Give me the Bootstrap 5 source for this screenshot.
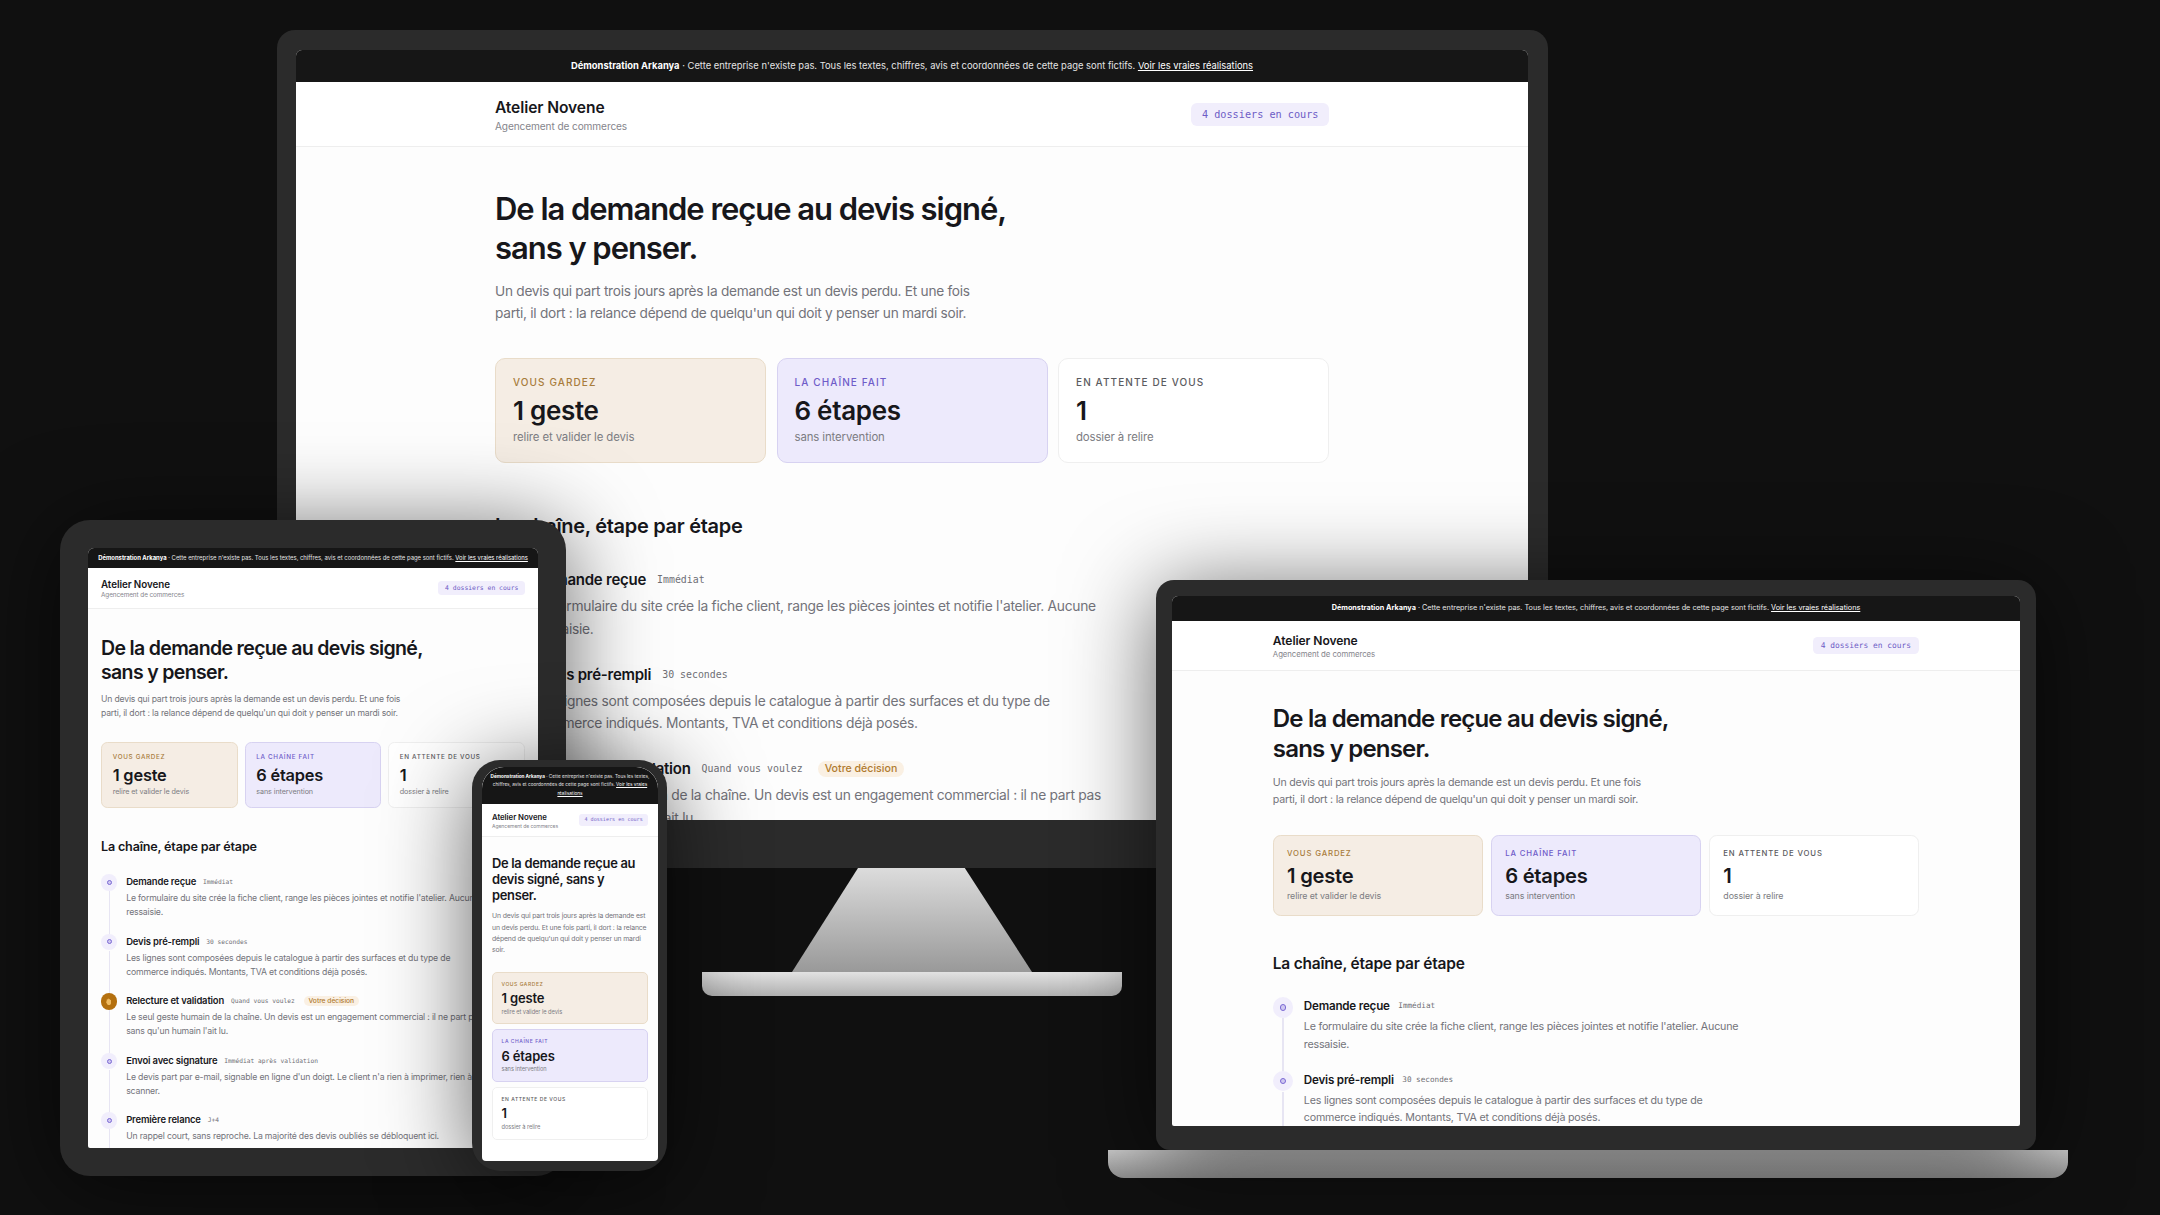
<!DOCTYPE html>
<html lang="fr">
<head>
  <meta charset="UTF-8" />
  <title>Atelier Novene - maquettes</title>
  <link href="https://cdn.jsdelivr.net/npm/bootstrap@5.3.0/dist/css/bootstrap.min.css" rel="stylesheet">
  <style>
    body { margin: 0; background: #101010; width: 2160px; height: 1215px; overflow: hidden; font-family: "Inter", "Noto Sans", sans-serif; }
    .stage { position: relative; width: 2160px; height: 1215px; }
    .device { position: absolute; background: #2b2b2b; box-shadow: 0 10px 90px rgba(0,0,0,.6); }
    .screen-area { position: absolute; background: #fff; overflow: hidden; }

    .mon { left: 277px; top: 30px; width: 1271px; height: 838px; border-radius: 18px 18px 0 0; box-shadow: none; }
    .mon .screen-area { left: 19px; top: 20px; width: 1232px; height: 770px; border-radius: 6px 6px 0 0; }
    .mon-neck { position: absolute; left: 792px; top: 868px; width: 240px; height: 104px; clip-path: polygon(27.5% 0, 72% 0, 100% 100%, 0 100%); background: linear-gradient(#dcdcdc, #999); }
    .mon-base { position: absolute; left: 702px; top: 972px; width: 420px; height: 24px; border-radius: 0 0 10px 10px; background: linear-gradient(#e2e2e2, #b0b0b0); }

    .lap { left: 1156px; top: 580px; width: 880px; height: 570px; border-radius: 18px 18px 14px 14px; }
    .lap .screen-area { left: 16px; top: 16px; width: 848px; height: 530px; border-radius: 6px 6px 2px 2px; }
    .lap-base { position: absolute; left: 1108px; top: 1150px; width: 960px; height: 28px; border-radius: 0 0 16px 16px; background: linear-gradient(#c8c8c8, #8f8f8f); }

    .tab { left: 60px; top: 520px; width: 506px; height: 656px; border-radius: 30px; }
    .tab .screen-area { left: 28px; top: 28px; width: 450px; height: 600px; border-radius: 6px 6px 2px 2px; }

    .pho { left: 472px; top: 760px; width: 195px; height: 411px; border-radius: 28px; }
    .pho .screen-area { left: 10px; top: 7px; width: 176px; height: 394px; border-radius: 22px 22px 4px 4px; }

    .site { width: 100%; background: #fdfdfd; color: #17171b; }
    .z-lap { zoom: .775; }
    .z-tab { zoom: .63; }
    .z-pho { zoom: .5; }

    .demo-bar { background: #161616; color: #e4e4e4; height: 32px; font-size: 9.4px; line-height: 32px; text-align: center; white-space: nowrap; }
    .demo-bar strong { color: #fff; font-weight: 700; }
    .demo-bar a { color: #fff; }
    .site-head { height: 65px; background: #fff; border-bottom: 1px solid #eeeeee; }
    .wrap-inner { width: 834px; margin: 0 auto; }
    .brand-name { font-size: 15.6px; font-weight: 600; line-height: 20px; letter-spacing: -.1px; margin-top: 3px; }
    .brand-sub { font-size: 10.1px; line-height: 16px; color: #85858c; letter-spacing: -.1px; }
    .count-pill { background: #f1eefc; color: #6d5cc6; font-family: "DejaVu Sans Mono", "Liberation Mono", monospace; font-size: 10.2px; padding: 0 10.5px; height: 23px; line-height: 23px; border-radius: 6px; }

    .hero-title { font-size: 31px; line-height: 39px; font-weight: 600; letter-spacing: -1.05px; margin: 42px 0 0; color: #17171b; }
    .hero-text { font-size: 13.7px; line-height: 21.5px; color: #73737a; margin: 14px 0 0; width: 490px; letter-spacing: -.02em; }
    .stat-row { display: flex; gap: 10.5px; margin-top: 34px; }
    .stat-box { flex: 1 1 0; height: 105px; border: 1px solid #efefef; border-radius: 10px; background: #fff; padding: 16px 17px 0; }
    .stat-keep { background: #f5ede4; border-color: #e9dcc9; }
    .stat-chain { background: #edeafc; border-color: #d7d2f1; }
    .stat-label { font-size: 10px; line-height: 14px; font-weight: 500; letter-spacing: 1.1px; text-transform: uppercase; color: #5b5b60; }
    .stat-keep .stat-label { color: #a87c3c; }
    .stat-chain .stat-label { color: #6f5cc9; }
    .stat-value { font-size: 26px; line-height: 30px; font-weight: 600; margin-top: 6.5px; letter-spacing: -.3px; }
    .stat-sub { font-size: 11.4px; line-height: 16px; margin-top: 3.5px; color: #7c7c82; letter-spacing: -.01em; }

    .chain-title { font-size: 20px; line-height: 26px; font-weight: 600; margin: 49.5px 0 0; letter-spacing: -.3px; }
    .step-list { margin-top: 29.5px; }
    .step-item { display: flex; gap: 14px; height: 94.5px; }
    .step-rail { position: relative; width: 26px; flex: none; }
    .step-rail::after { content: ""; position: absolute; left: 12px; top: 27px; bottom: -2px; width: 2px; background: #e7e5f3; }
    .step-dot { width: 26px; height: 26px; border-radius: 50%; background: #f1eefc; display: flex; align-items: center; justify-content: center; }
    .step-dot span { width: 8px; height: 8px; border-radius: 50%; border: 2.5px solid #7a68d4; background: #cfc8f0; }
    .step-human { background: #b4700f; }
    .step-head { display: flex; align-items: center; gap: 11px; line-height: 24px; height: 24px; white-space: nowrap; }
    .step-name { font-size: 15px; font-weight: 600; letter-spacing: -.25px; }
    .step-time { font-family: "DejaVu Sans Mono", "Liberation Mono", monospace; font-size: 9.9px; color: #6f6f75; }
    .step-tag { background: #faf0e3; color: #b07a2e; font-size: 10.6px; font-weight: 500; line-height: 16px; padding: 0 7px; border-radius: 9px; margin-left: 4px; }
    .step-desc { font-size: 13.8px; line-height: 22.5px; color: #73737a; width: 575px; margin: 3px 0 0; letter-spacing: -.02em; }

    /* tablet width */
    .z-tab .wrap-inner { width: 673px; }

    /* mobile width of the same page */
    .z-pho .wrap-inner { width: 312px; }
    .z-pho .demo-bar { height: 74px; line-height: 17px; padding: 9px 14px 0; white-space: normal; font-size: 9.4px; }
    .z-pho .hero-title { font-size: 25.8px; line-height: 32.6px; margin-top: 38px; letter-spacing: -.6px; }
    .z-pho .hero-text { width: 312px; line-height: 22.6px; margin-top: 12px; }
    .z-pho .stat-row { flex-direction: column; margin-top: 32px; }
    .z-pho .stat-box { flex: none; width: 312px; }
  </style>
</head>
<body>
<div class="stage">

  <!-- iMac -->
  <div class="mon-neck"></div>
  <div class="mon-base"></div>
  <div class="device mon">
    <div class="screen-area">
      <div class="site">
        <div class="demo-bar"><strong>Démonstration Arkanya</strong> · Cette entreprise n'existe pas. Tous les textes, chiffres, avis et coordonnées de cette page sont fictifs. <a href="#">Voir les vraies réalisations</a></div>
        <div class="site-head"><div class="wrap-inner d-flex justify-content-between align-items-center h-100">
          <div><div class="brand-name">Atelier Novene</div><div class="brand-sub">Agencement de commerces</div></div>
          <div class="count-pill">4 dossiers en cours</div>
        </div></div>
        <div class="wrap-inner">
          <h1 class="hero-title">De la demande reçue au devis signé,<br>sans y penser.</h1>
          <p class="hero-text">Un devis qui part trois jours après la demande est un devis perdu. Et une fois parti, il dort : la relance dépend de quelqu'un qui doit y penser un mardi soir.</p>
          <div class="stat-row">
            <div class="stat-box stat-keep"><div class="stat-label">Vous gardez</div><div class="stat-value">1 geste</div><div class="stat-sub">relire et valider le devis</div></div>
            <div class="stat-box stat-chain"><div class="stat-label">La chaîne fait</div><div class="stat-value">6 étapes</div><div class="stat-sub">sans intervention</div></div>
            <div class="stat-box"><div class="stat-label">En attente de vous</div><div class="stat-value">1</div><div class="stat-sub">dossier à relire</div></div>
          </div>
          <h2 class="chain-title">La chaîne, étape par étape</h2>
          <div class="step-list">
            <div class="step-item"><div class="step-rail"><div class="step-dot"><span></span></div></div><div><div class="step-head"><span class="step-name">Demande reçue</span><span class="step-time">Immédiat</span></div><p class="step-desc">Le formulaire du site crée la fiche client, range les pièces jointes et notifie l'atelier. Aucune ressaisie.</p></div></div>
            <div class="step-item"><div class="step-rail"><div class="step-dot"><span></span></div></div><div><div class="step-head"><span class="step-name">Devis pré-rempli</span><span class="step-time">30 secondes</span></div><p class="step-desc">Les lignes sont composées depuis le catalogue à partir des surfaces et du type de commerce indiqués. Montants, TVA et conditions déjà posés.</p></div></div>
            <div class="step-item"><div class="step-rail"><div class="step-dot step-human"><svg width="15" height="15" viewBox="0 0 14 14"><path d="M4 7V4.2a.8.8 0 0 1 1.6 0V6.5V3.2a.8.8 0 0 1 1.6 0V6.5V3.8a.8.8 0 0 1 1.6 0V6.8V5a.8.8 0 0 1 1.6 0V9c0 2-1.3 3-3 3S5 11 4.2 9.6L3 7.6c-.4-.8.6-1.4 1-.6z" fill="#f0bb62"/></svg></div></div><div><div class="step-head"><span class="step-name">Relecture et validation</span><span class="step-time">Quand vous voulez</span><span class="step-tag">Votre décision</span></div><p class="step-desc">Le seul geste humain de la chaîne. Un devis est un engagement commercial : il ne part pas sans qu'un humain l'ait lu.</p></div></div>
          </div>
        </div>
      </div>
    </div>
  </div>

  <!-- tablette -->
  <div class="device tab">
    <div class="screen-area">
      <div class="site z-tab">
        <div class="demo-bar"><strong>Démonstration Arkanya</strong> · Cette entreprise n'existe pas. Tous les textes, chiffres, avis et coordonnées de cette page sont fictifs. <a href="#">Voir les vraies réalisations</a></div>
        <div class="site-head"><div class="wrap-inner d-flex justify-content-between align-items-center h-100">
          <div><div class="brand-name">Atelier Novene</div><div class="brand-sub">Agencement de commerces</div></div>
          <div class="count-pill">4 dossiers en cours</div>
        </div></div>
        <div class="wrap-inner">
          <h1 class="hero-title">De la demande reçue au devis signé,<br>sans y penser.</h1>
          <p class="hero-text">Un devis qui part trois jours après la demande est un devis perdu. Et une fois parti, il dort : la relance dépend de quelqu'un qui doit y penser un mardi soir.</p>
          <div class="stat-row">
            <div class="stat-box stat-keep"><div class="stat-label">Vous gardez</div><div class="stat-value">1 geste</div><div class="stat-sub">relire et valider le devis</div></div>
            <div class="stat-box stat-chain"><div class="stat-label">La chaîne fait</div><div class="stat-value">6 étapes</div><div class="stat-sub">sans intervention</div></div>
            <div class="stat-box"><div class="stat-label">En attente de vous</div><div class="stat-value">1</div><div class="stat-sub">dossier à relire</div></div>
          </div>
          <h2 class="chain-title">La chaîne, étape par étape</h2>
          <div class="step-list">
            <div class="step-item"><div class="step-rail"><div class="step-dot"><span></span></div></div><div><div class="step-head"><span class="step-name">Demande reçue</span><span class="step-time">Immédiat</span></div><p class="step-desc">Le formulaire du site crée la fiche client, range les pièces jointes et notifie l'atelier. Aucune ressaisie.</p></div></div>
            <div class="step-item"><div class="step-rail"><div class="step-dot"><span></span></div></div><div><div class="step-head"><span class="step-name">Devis pré-rempli</span><span class="step-time">30 secondes</span></div><p class="step-desc">Les lignes sont composées depuis le catalogue à partir des surfaces et du type de commerce indiqués. Montants, TVA et conditions déjà posés.</p></div></div>
            <div class="step-item"><div class="step-rail"><div class="step-dot step-human"><svg width="15" height="15" viewBox="0 0 14 14"><path d="M4 7V4.2a.8.8 0 0 1 1.6 0V6.5V3.2a.8.8 0 0 1 1.6 0V6.5V3.8a.8.8 0 0 1 1.6 0V6.8V5a.8.8 0 0 1 1.6 0V9c0 2-1.3 3-3 3S5 11 4.2 9.6L3 7.6c-.4-.8.6-1.4 1-.6z" fill="#f0bb62"/></svg></div></div><div><div class="step-head"><span class="step-name">Relecture et validation</span><span class="step-time">Quand vous voulez</span><span class="step-tag">Votre décision</span></div><p class="step-desc">Le seul geste humain de la chaîne. Un devis est un engagement commercial : il ne part pas sans qu'un humain l'ait lu.</p></div></div>
            <div class="step-item"><div class="step-rail"><div class="step-dot"><span></span></div></div><div><div class="step-head"><span class="step-name">Envoi avec signature</span><span class="step-time">Immédiat après validation</span></div><p class="step-desc">Le devis part par e-mail, signable en ligne d'un doigt. Le client n'a rien à imprimer, rien à scanner.</p></div></div>
            <div class="step-item"><div class="step-rail"><div class="step-dot"><span></span></div></div><div><div class="step-head"><span class="step-name">Première relance</span><span class="step-time">J+4</span></div><p class="step-desc">Un rappel court, sans reproche. La majorité des devis oubliés se débloquent ici.</p></div></div>
          </div>
        </div>
      </div>
    </div>
  </div>

  <!-- portable -->
  <div class="lap-base"></div>
  <div class="device lap">
    <div class="screen-area">
      <div class="site z-lap">
        <div class="demo-bar"><strong>Démonstration Arkanya</strong> · Cette entreprise n'existe pas. Tous les textes, chiffres, avis et coordonnées de cette page sont fictifs. <a href="#">Voir les vraies réalisations</a></div>
        <div class="site-head"><div class="wrap-inner d-flex justify-content-between align-items-center h-100">
          <div><div class="brand-name">Atelier Novene</div><div class="brand-sub">Agencement de commerces</div></div>
          <div class="count-pill">4 dossiers en cours</div>
        </div></div>
        <div class="wrap-inner">
          <h1 class="hero-title">De la demande reçue au devis signé,<br>sans y penser.</h1>
          <p class="hero-text">Un devis qui part trois jours après la demande est un devis perdu. Et une fois parti, il dort : la relance dépend de quelqu'un qui doit y penser un mardi soir.</p>
          <div class="stat-row">
            <div class="stat-box stat-keep"><div class="stat-label">Vous gardez</div><div class="stat-value">1 geste</div><div class="stat-sub">relire et valider le devis</div></div>
            <div class="stat-box stat-chain"><div class="stat-label">La chaîne fait</div><div class="stat-value">6 étapes</div><div class="stat-sub">sans intervention</div></div>
            <div class="stat-box"><div class="stat-label">En attente de vous</div><div class="stat-value">1</div><div class="stat-sub">dossier à relire</div></div>
          </div>
          <h2 class="chain-title">La chaîne, étape par étape</h2>
          <div class="step-list">
            <div class="step-item"><div class="step-rail"><div class="step-dot"><span></span></div></div><div><div class="step-head"><span class="step-name">Demande reçue</span><span class="step-time">Immédiat</span></div><p class="step-desc">Le formulaire du site crée la fiche client, range les pièces jointes et notifie l'atelier. Aucune ressaisie.</p></div></div>
            <div class="step-item"><div class="step-rail"><div class="step-dot"><span></span></div></div><div><div class="step-head"><span class="step-name">Devis pré-rempli</span><span class="step-time">30 secondes</span></div><p class="step-desc">Les lignes sont composées depuis le catalogue à partir des surfaces et du type de commerce indiqués. Montants, TVA et conditions déjà posés.</p></div></div>
          </div>
        </div>
      </div>
    </div>
  </div>

  <!-- téléphone -->
  <div class="device pho">
    <div class="screen-area">
      <div class="site z-pho">
        <div class="demo-bar"><strong>Démonstration Arkanya</strong> · Cette entreprise n'existe pas. Tous les textes, chiffres, avis et coordonnées de cette page sont fictifs. <a href="#">Voir les vraies réalisations</a></div>
        <div class="site-head"><div class="wrap-inner d-flex justify-content-between align-items-center h-100">
          <div><div class="brand-name">Atelier Novene</div><div class="brand-sub">Agencement de commerces</div></div>
          <div class="count-pill">4 dossiers en cours</div>
        </div></div>
        <div class="wrap-inner">
          <h1 class="hero-title">De la demande reçue au devis signé, sans y penser.</h1>
          <p class="hero-text">Un devis qui part trois jours après la demande est un devis perdu. Et une fois parti, il dort : la relance dépend de quelqu'un qui doit y penser un mardi soir.</p>
          <div class="stat-row">
            <div class="stat-box stat-keep"><div class="stat-label">Vous gardez</div><div class="stat-value">1 geste</div><div class="stat-sub">relire et valider le devis</div></div>
            <div class="stat-box stat-chain"><div class="stat-label">La chaîne fait</div><div class="stat-value">6 étapes</div><div class="stat-sub">sans intervention</div></div>
            <div class="stat-box"><div class="stat-label">En attente de vous</div><div class="stat-value">1</div><div class="stat-sub">dossier à relire</div></div>
          </div>
        </div>
      </div>
    </div>
  </div>

</div>
<script src="https://cdn.jsdelivr.net/npm/bootstrap@5.3.0/dist/js/bootstrap.bundle.min.js"></script>
</body>
</html>
